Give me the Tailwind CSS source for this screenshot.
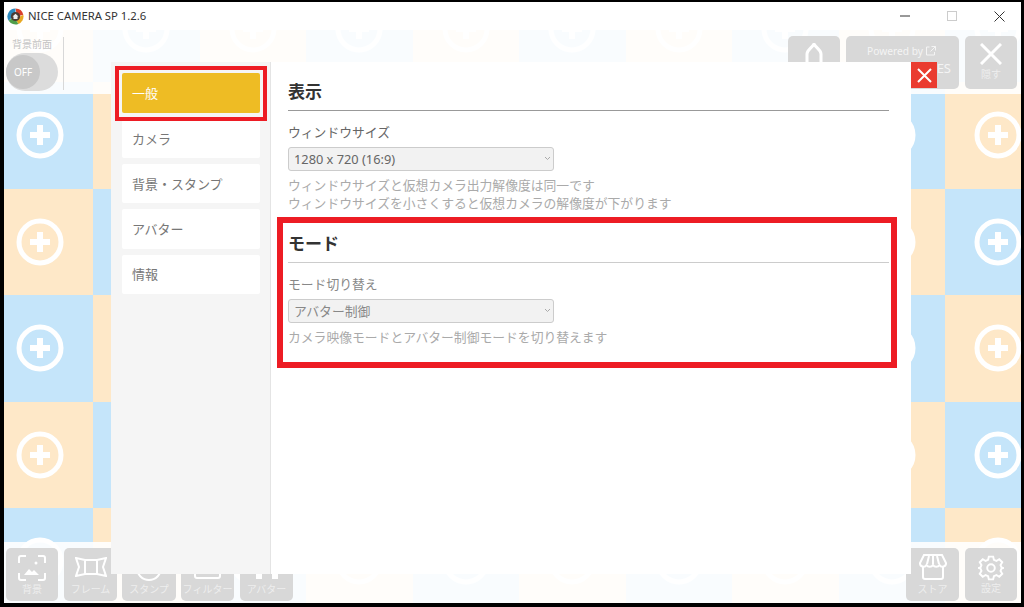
<!DOCTYPE html>
<html lang="ja">
  <head>
    <meta charset="utf-8" />
    <title>NICE CAMERA SP</title>
    <script src="https://cdn.jsdelivr.net/npm/@tailwindcss/browser@4"></script>
  </head>
  <body class="m-0 bg-black">
    <div class="w-[1024px] h-[607px] overflow-hidden bg-black pt-[2px] pl-[4px] pr-[3px] pb-[4px] font-['Noto_Sans','Noto_Sans_CJK_JP',sans-serif]">
      <div class="flex flex-col w-full h-full bg-white">
        <!-- title bar -->
        <div class="flex items-center h-[28px] shrink-0 pl-[3px] bg-white">
          <svg class="w-[17px] h-[17px] mr-[4px]" viewBox="0 0 17 17">
            <path d="M8.500 0.500a8 8 0 0 1 7.800 6.200L10 8.500z" fill="#d9402b" />
            <path d="M16.300 6.700a8 8 0 0 1-5 9.300L8.500 11z" fill="#e8a923" />
            <path d="M11.300 16a8 8 0 0 1-9.600-3.200L7 8.500z" fill="#4f9e4a" />
            <path d="M1.700 12.800a8 8 0 0 1 6.800-12.300V6z" fill="#2d8bc0" />
            <circle cx="8.500" cy="8.500" r="4.600" fill="#4b3b33" />
            <path d="M8.500 5.700 11.500 8.500h-1v2.500h-4V8.500h-1z" fill="#eee" />
          </svg>
          <span class="text-[11.300px] leading-none text-[#333]">NICE CAMERA SP 1.2.6</span>
          <div class="ml-auto flex items-center text-[#333]">
            <svg class="w-[10px] h-[10px] mr-[37px]" viewBox="0 0 10 10"><path d="M0 5h10" stroke="#333" stroke-width="1" /></svg>
            <svg class="w-[10px] h-[10px] mr-[37px]" viewBox="0 0 10 10"><rect x=".5" y=".5" width="9" height="9" fill="none" stroke="#ccc" /></svg>
            <svg class="w-[11px] h-[11px] mr-[16px]" viewBox="0 0 11 11"><path d="M.5.5l10 10M10.500.5l-10 10" stroke="#333" stroke-width="1" /></svg>
          </div>
        </div>

        <!-- stage -->
        <div class="relative flex-1 overflow-hidden">
          <div id="checker" class="absolute left-[-17.5px] top-[-54.5px] grid grid-cols-[repeat(11,106.5px)] auto-rows-[106.5px]"></div>

          <!-- top toolbar -->
          <div class="absolute top-0 inset-x-0 h-[64px] bg-white/90 flex items-start">
            <div class="w-[52px] ml-[2px] mt-[8px] flex flex-col items-center">
              <span class="text-[10px] leading-[12px] text-[#c4c4c4]">背景前面</span>
              <div class="mt-[3px] w-[52px] h-[38px] rounded-full bg-[#dcdcdc]">
                <div class="w-[34px] h-[34px] mt-[2px] rounded-full bg-[#c8c8c8] flex items-center justify-center text-[10px] text-white">OFF</div>
              </div>
            </div>
            <div class="w-[1px] h-[53px] mt-[7px] ml-[5px] bg-[#d8d8d8]"></div>
            <div class="ml-auto flex gap-[6px] mt-[6px] mr-[4px]">
              <div class="w-[52px] h-[53px] rounded-[5px] bg-[#d8d8d8] flex justify-center pt-[7px]">
                <svg class="w-[18px] h-[26px]" viewBox="0 0 18 26"><path d="M2 25V11C2 7 6 6 9 1c3 5 7 6 7 10v14" fill="none" stroke="#fff" stroke-width="3" /></svg>
              </div>
              <div class="relative w-[113px] h-[53px] rounded-[5px] bg-[#d8d8d8] text-[#f4f4f4]">
                <div class="flex items-center justify-center gap-[3px] mt-[8px] ml-[-2px] text-[10.200px] leading-[14px]">
                  <span>Powered by</span>
                  <svg class="w-[10px] h-[10px]" viewBox="0 0 10 10"><path d="M8.500 6v3h-8V1h3M5.500.5h4v4M9.500.5l-5 5" fill="none" stroke="#f4f4f4" /></svg>
                </div>
                <span class="absolute right-[8px] top-[24px] text-[13px] leading-[16px]">ES</span>
              </div>
              <div class="w-[52px] h-[53px] rounded-[5px] bg-[#d8d8d8] flex flex-col items-center text-[#eee]">
                <svg class="w-[22px] h-[22px] mt-[7px]" viewBox="0 0 22 22"><path d="M1 1l20 20M21 1L1 21" stroke="#fff" stroke-width="3" /></svg>
                <span class="text-[10px] leading-[14px] mt-[2px]">隠す</span>
              </div>
            </div>
          </div>

          <!-- bottom toolbar -->
          <div class="absolute bottom-0 inset-x-0 h-[61px] bg-white/90 flex items-start pt-[6px] pl-[2px] pr-[4px] text-[#eee]">
            <div class="w-[52px] h-[53px] rounded-[5px] bg-[#d8d8d8] flex flex-col items-center">
              <svg class="w-[28px] h-[26px] mt-[7px]" viewBox="0 0 28 26">
                <path d="M1 8V3a2 2 0 0 1 2-2h5M20 1h5a2 2 0 0 1 2 2v5M27 18v5a2 2 0 0 1-2 2h-5M8 25H3a2 2 0 0 1-2-2v-5" fill="none" stroke="#fff" stroke-width="2" />
                <circle cx="18" cy="8" r="1.500" fill="#fff" />
                <path d="M6 20l5-6 3 3 2-2 5 5z" fill="#fff" />
              </svg>
              <span class="text-[10px] leading-[14px] mt-[1px]">背景</span>
            </div>
            <div class="ml-[6px] w-[53px] h-[53px] rounded-[5px] bg-[#d8d8d8] flex flex-col items-center">
              <svg class="w-[32px] h-[20px] mt-[9px]" viewBox="0 0 32 20"><path d="M1 1l9 2h12l9-2-3 9 3 9-9-2H10l-9 2 3-9zM10 3v14M22 3v14" fill="none" stroke="#fff" stroke-width="2" /></svg>
              <span class="text-[10px] leading-[14px] mt-[5px]">フレーム</span>
            </div>
            <div class="ml-[5px] w-[54px] h-[53px] rounded-[5px] bg-[#d8d8d8] flex flex-col items-center">
              <svg class="w-[26px] h-[26px] mt-[7px]" viewBox="0 0 26 26"><circle cx="13" cy="13" r="12" fill="none" stroke="#fff" stroke-width="2" /></svg>
              <span class="text-[10px] leading-[14px] mt-[1px]">スタンプ</span>
            </div>
            <div class="ml-[5px] w-[53px] h-[53px] rounded-[5px] bg-[#d8d8d8] flex flex-col items-center">
              <svg class="w-[27px] h-[24px] mt-[7px]" viewBox="0 0 27 24"><rect x="1" y="1" width="25" height="22" rx="2" fill="none" stroke="#fff" stroke-width="2" /></svg>
              <span class="text-[10px] leading-[14px] mt-[3px]">フィルター</span>
            </div>
            <div class="ml-[6px] w-[53px] h-[53px] rounded-[5px] bg-[#d8d8d8] flex flex-col items-center">
              <svg class="w-[26px] h-[24px] mt-[7px]" viewBox="0 0 26 24"><path d="M2 24v-6h6v6M18 24v-6h6v6" fill="#fff" /></svg>
              <span class="text-[10px] leading-[14px] mt-[3px]">アバター</span>
            </div>
            <div class="ml-auto w-[53px] h-[53px] rounded-[5px] bg-[#d8d8d8] flex flex-col items-center">
              <svg class="w-[28px] h-[26px] mt-[6px]" viewBox="0 0 28 26">
                <path d="M5 1h18l4 8a3.500 3.500 0 0 1-6.500 2 3.800 3.800 0 0 1-6.500 0 3.800 3.800 0 0 1-6.500 0A3.500 3.500 0 0 1 1 9z" fill="none" stroke="#fff" stroke-width="2" />
                <path d="M10 2L8 10M14 2v8M18 2l2 8M4 13v10a2 2 0 0 0 2 2h16a2 2 0 0 0 2-2V13" fill="none" stroke="#fff" stroke-width="2" />
              </svg>
              <span class="text-[10px] leading-[14px] mt-[2px]">ストア</span>
            </div>
            <div class="ml-[6px] w-[52px] h-[53px] rounded-[5px] bg-[#d8d8d8] flex flex-col items-center">
              <svg class="w-[26px] h-[26px] mt-[7px]" viewBox="0 0 24 24" fill="none" stroke="#fff" stroke-width="1.800">
                <circle cx="12" cy="12" r="3.500" />
                <path d="M10 1.500h4l.7 3 2.300 1 2.600-1.600 2.800 2.800L20.800 9.300l.9 2.200 1.800.5v0l-1.800.5-.9 2.200 1.600 2.600-2.800 2.800-2.600-1.600-2.300 1-.7 3h-4l-.7-3-2.300-1-2.600 1.600-2.800-2.800 1.600-2.600-.9-2.200-1.800-.5v0l1.800-.5.9-2.200L1.600 6.700l2.800-2.800L7 5.500l2.300-1z" />
              </svg>
              <span class="text-[10px] leading-[14px]">設定</span>
            </div>
          </div>

          <!-- settings modal -->
          <div class="absolute left-[107px] top-[32px] w-[800px] h-[512px] bg-white flex">
            <div class="w-[160px] shrink-0 bg-[#f5f5f5] border-r border-[#e4e4e4] pt-[11px] pl-[11px] pr-[10px] flex flex-col gap-[6px] text-[13px] text-[#777]">
              <div class="h-[40px] rounded-[2px] bg-[#eebc24] text-white flex items-center pl-[10px] pt-[2px]">一般</div>
              <div class="h-[39px] rounded-[2px] bg-white flex items-center pl-[10px] pt-[2px]">カメラ</div>
              <div class="h-[39px] rounded-[2px] bg-white flex items-center pl-[10px] pt-[2px]">背景・スタンプ</div>
              <div class="h-[40px] rounded-[2px] bg-white flex items-center pl-[10px] pt-[2px]">アバター</div>
              <div class="h-[39px] rounded-[2px] bg-white flex items-center pl-[10px]">情報</div>
            </div>
            <div class="flex-1 pl-[17px] pr-[22px] text-[12.800px] leading-[18px]">
              <h2 class="mt-[18px] text-[17px] leading-[24px] font-bold text-[#333]">表示</h2>
              <div class="mt-[6px] h-[1px] bg-[#999]"></div>
              <p class="mt-[12px] text-[#666]">ウィンドウサイズ</p>
              <div class="relative mt-[6px] w-[266px]">
                <select class="appearance-none w-full h-[24px] pl-[5px] rounded-[3px] border border-[#ccc] bg-[#f2f2f2] text-[12.800px] text-[#666]">
                  <option>1280 x 720 (16:9)</option>
                </select>
                <svg class="absolute right-[3px] top-[9px] w-[7px] h-[5px]" viewBox="0 0 7 5"><path d="M1 1l2.500 2.500L6 1" fill="none" stroke="#aaa" /></svg>
              </div>
              <p class="mt-[5px] text-[#aaa]">ウィンドウサイズと仮想カメラ出力解像度は同一です</p>
              <p class="text-[#aaa]">ウィンドウサイズを小さくすると仮想カメラの解像度が下がります</p>
              <h2 class="mt-[20px] text-[17px] leading-[24px] font-bold text-[#333]">モード</h2>
              <div class="mt-[6px] h-[1px] bg-[#ccc]"></div>
              <p class="mt-[12px] text-[#888]">モード切り替え</p>
              <div class="relative mt-[6px] w-[266px]">
                <select class="appearance-none w-full h-[24px] pl-[5px] rounded-[3px] border border-[#ccc] bg-[#f2f2f2] text-[12.800px] text-[#888]">
                  <option>アバター制御</option>
                </select>
                <svg class="absolute right-[3px] top-[9px] w-[7px] h-[5px]" viewBox="0 0 7 5"><path d="M1 1l2.500 2.500L6 1" fill="none" stroke="#aaa" /></svg>
              </div>
              <p class="mt-[5px] text-[#aaa]">カメラ映像モードとアバター制御モードを切り替えます</p>
            </div>

            <!-- close button -->
            <div class="absolute left-[800px] top-0 w-[26px] h-[26px] bg-[#ea3c30] flex items-center justify-center">
              <svg class="w-[15px] h-[15px]" viewBox="0 0 15 15"><path d="M1 1l13 13M14 1L1 14" stroke="#fff" stroke-width="2" /></svg>
            </div>

            <!-- red annotation boxes -->
            <div class="absolute left-[4px] top-[4px] w-[152px] h-[55px] border-4 border-[#ed1c24] pointer-events-none"></div>
            <div class="absolute left-[166px] top-[155px] w-[620px] h-[151px] border-[6px] border-[#ed1c24] pointer-events-none"></div>
          </div>
        </div>
      </div>
    </div>
    <script>
      // checkerboard of empty background slots
      const checker = document.getElementById("checker");
      for (let r = 0; r < 6; r++) {
        for (let c = 0; c < 11; c++) {
          const cell = document.createElement("div");
          cell.className = "flex items-center justify-center " + ((r + c) % 2 ? "bg-[#c5e5fa]" : "bg-[#fee8c8]");
          cell.innerHTML =
            '<svg class="w-[48px] h-[48px]" viewBox="0 0 48 48"><circle cx="24" cy="24" r="21" fill="none" stroke="#fff" stroke-width="5" /><path d="M24 14v20M14 24h20" stroke="#fff" stroke-width="6" /></svg>';
          checker.appendChild(cell);
        }
      }
    </script>
  </body>
</html>
